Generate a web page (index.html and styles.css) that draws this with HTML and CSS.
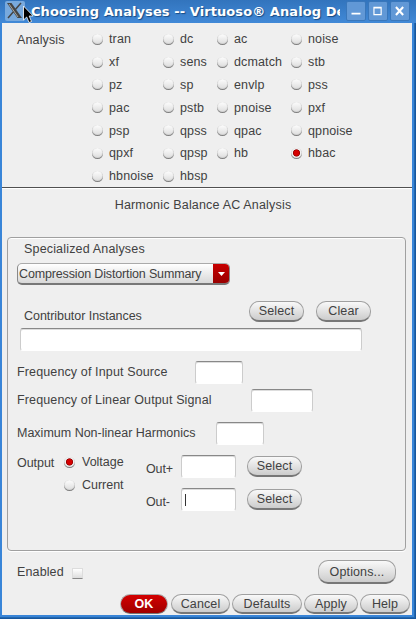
FILE: index.html
```html
<!DOCTYPE html>
<html lang="en">
<head>
<meta charset="utf-8">
<title>Choosing Analyses</title>
<link rel="stylesheet" href="styles.css">
</head>
<body>
<div class="window">
  <header class="titlebar">
    <svg class="app-icon" width="20" height="20" viewBox="0 0 20 20"><rect width="20" height="20" rx="2" fill="#78a9dd"/><path d="M2 2h4.500L17 17h-4.500z" fill="#444"/><path d="M16 2L3 17" stroke="#444" stroke-width="1.500"/><path d="M4 3l9 13" stroke="#aaa59c" stroke-width="1"/></svg>
    <h1 class="title">Choosing Analyses -- Virtuoso® Analog De</h1>
    <svg class="cursor" width="11" height="18" viewBox="0 0 11 18"><path d="M.5 1v14l3.200-3 2.300 5.500 2.500-1-2.300-5.500h4z" fill="#000" stroke="#fff" stroke-width=".8"/></svg>
    <div class="controls">
      <svg class="control" viewBox="0 0 20 20"><path d="M5 13h10" stroke="#fff" stroke-width="2"/></svg>
      <svg class="control" viewBox="0 0 20 20"><path d="M5.500 6h8v8h-8zM5.500 6.500h8" fill="none" stroke="#fff" stroke-width="1.300"/></svg>
      <svg class="control" viewBox="0 0 20 20"><path d="M5.500 5.500l8 9M13.500 5.500l-8 9" stroke="#fff" stroke-width="2.300"/></svg>
    </div>
  </header>
  <main class="content">
    <section class="analysis">
      <span class="analysis-label">Analysis</span>
      <div class="choices">
        <span class="choice"><i class="radio"></i>tran</span><span class="choice"><i class="radio"></i>dc</span><span class="choice"><i class="radio"></i>ac</span><span class="choice"><i class="radio"></i>noise</span>
        <span class="choice"><i class="radio"></i>xf</span><span class="choice"><i class="radio"></i>sens</span><span class="choice"><i class="radio"></i>dcmatch</span><span class="choice"><i class="radio"></i>stb</span>
        <span class="choice"><i class="radio"></i>pz</span><span class="choice"><i class="radio"></i>sp</span><span class="choice"><i class="radio"></i>envlp</span><span class="choice"><i class="radio"></i>pss</span>
        <span class="choice"><i class="radio"></i>pac</span><span class="choice"><i class="radio"></i>pstb</span><span class="choice"><i class="radio"></i>pnoise</span><span class="choice"><i class="radio"></i>pxf</span>
        <span class="choice"><i class="radio"></i>psp</span><span class="choice"><i class="radio"></i>qpss</span><span class="choice"><i class="radio"></i>qpac</span><span class="choice"><i class="radio"></i>qpnoise</span>
        <span class="choice"><i class="radio"></i>qpxf</span><span class="choice"><i class="radio"></i>qpsp</span><span class="choice"><i class="radio"></i>hb</span><span class="choice"><i class="radio on"></i>hbac</span>
        <span class="choice"><i class="radio"></i>hbnoise</span><span class="choice"><i class="radio"></i>hbsp</span>
      </div>
    </section>
    <h2 class="heading">Harmonic Balance AC Analysis</h2>
    <section class="group">
      <div class="group-title">Specialized Analyses</div>
      <div class="combo"><span class="combo-text">Compression Distortion Summary</span><span class="combo-arrow"><svg width="7" height="4" viewBox="0 0 7 4"><path d="M0 0h7L3.500 4z" fill="#fff"/></svg></span></div>
      <div class="row contributors"><span class="label">Contributor Instances</span><span class="button">Select</span><span class="button">Clear</span></div>
      <div class="field instances"></div>
      <div class="row input-source"><span class="label">Frequency of Input Source</span><div class="field"></div></div>
      <div class="row output-signal"><span class="label">Frequency of Linear Output Signal</span><div class="field"></div></div>
      <div class="row harmonics"><span class="label">Maximum Non-linear Harmonics</span><div class="field"></div></div>
      <div class="output">
        <span class="output-label">Output</span>
        <div class="output-types"><span class="choice"><i class="radio on"></i>Voltage</span><span class="choice"><i class="radio"></i>Current</span></div>
        <div class="nets">
          <div class="net"><span class="label">Out+</span><div class="field"></div><span class="button">Select</span></div>
          <div class="net"><span class="label">Out-</span><div class="field"><i class="caret"></i></div><span class="button">Select</span></div>
        </div>
      </div>
    </section>
    <div class="enabled"><span class="label">Enabled</span><i class="check"></i><span class="button options">Options...</span></div>
    <footer class="actions"><span class="button ok">OK</span><span class="button cancel">Cancel</span><span class="button defaults">Defaults</span><span class="button apply">Apply</span><span class="button help">Help</span></footer>
  </main>
</div>
</body>
</html>
```

FILE: styles.css
```css
* { box-sizing: border-box; }
body { margin: 0; font: 12.5px/16px "Liberation Sans", sans-serif; letter-spacing: .13px; color: #414141; white-space: nowrap; }
.window { width: 416px; height: 619px; overflow: hidden; padding: 0 4px 4px 2px; background: #3985d8; box-shadow: inset -1px -1px #16569f, inset -2px -2px #2368ae; }
.titlebar { position: relative; display: flex; height: 23px; margin: 0 -4px 0 -2px; padding: 1px 7px 0 5px; background: linear-gradient(#3274bd, #4189d7); }
.app-icon { flex: none; }
.title { flex: none; width: 309px; height: 22px; margin: 0 6px 0 6px; overflow: hidden; font: bold 13px/21px "DejaVu Sans", sans-serif; letter-spacing: .08px; color: #fff; text-shadow: 1px 1px 1px #174a83; }
.cursor { position: absolute; left: 23px; top: 5px; }
.controls { display: flex; gap: 2px; }
.control { flex: none; width: 20px; height: 20px; border: 1px solid #3977bb; border-radius: 2px; background: #6198d6; }
.content { height: 592px; background: #efefef; }
.analysis { display: flex; height: 165px; padding: 5px 0 0 15px; border-bottom: 1px solid #505050; box-shadow: 0 1px #fff; }
.analysis-label { width: 75px; padding-top: 4px; }
.choices { display: grid; grid-template-columns: 71px 54px 74px 100px; grid-template-rows: repeat(7, 22.8px); }
.choice { display: flex; align-items: center; gap: 6px; }
.radio { width: 11px; height: 11px; border-radius: 50%; background: linear-gradient(#fdfdfd, #dadada); box-shadow: inset 0 -1px 1px #777, inset 0 0 1px #ddd; }
.radio.on { background: radial-gradient(circle at 50% 45%, #d50000 0 2.500px, #900000 3.200px, #f2f2f2 4px); }
.heading { height: 49px; margin: 0; padding: 9px 8px 0 0; font: inherit; line-height: 17px; text-align: center; letter-spacing: .18px; }
.group { height: 314px; margin: 0 6px 0 5px; border: 1px solid #a0a0a0; border-radius: 4px; box-shadow: inset 0 1px #fff, 0 1px #fff; padding-left: 9px; }
.group-title { padding: 3px 0 0 7px; height: 25px; letter-spacing: .17px; }
.combo { display: flex; width: 213px; height: 22px; border: 1px solid #888; border-top-color: #aaa; border-bottom: 2px solid #777; border-radius: 5px; overflow: hidden; background: linear-gradient(#fff, #d8d8d8); }
.combo-text { flex: 1; padding-left: 1px; line-height: 20px; letter-spacing: -.15px; }
.combo-arrow { display: flex; align-items: center; justify-content: center; width: 16px; background: linear-gradient(#c80000, #980000); }
.row { display: flex; }
.contributors { height: 43px; padding: 16px 0 0 7px; }
.contributors .label { width: 225px; padding-top: 7px; letter-spacing: -.05px; }
.contributors .button + .button { margin-left: 12px; }
.button { display: flex; flex: none; align-items: center; justify-content: center; width: 55px; height: 21px; border: 1px solid #a0a0a0; border-bottom: 2px solid #777; border-radius: 10px; background: linear-gradient(#f9f9f9, #ccc); }
.field { height: 23px; background: #fff; border: 1px solid #ccc; border-top: 1px solid #888; border-bottom-color: #fff; border-radius: 3px; box-shadow: inset 0 1px #ddd; }
.instances { width: 342px; margin-left: 3px; }
.row .label { line-height: 23px; }
.contributors .label { line-height: 16px; }
.input-source { height: 28px; margin-top: 10px; }
.input-source .label { width: 178px; }
.input-source .field { width: 48px; }
.output-signal { height: 33px; }
.output-signal .label { width: 234px; }
.output-signal .field { width: 62px; }
.harmonics { height: 33px; }
.harmonics .label { width: 199px; letter-spacing: 0; }
.harmonics .field { width: 48px; }
.output { display: flex; }
.output-label { width: 47px; line-height: 16px; letter-spacing: -.05px; }
.output-types { width: 82px; }
.output-types .choice { height: 23px; gap: 7px; margin-top: -4.500px; margin-bottom: 4.500px; letter-spacing: -.02px; }
.net { display: flex; height: 33px; }
.net .label { width: 35px; line-height: 28px; letter-spacing: -.1px; }
.net .field { width: 55px; padding: 5px 0 0 3px; }
.net .button { margin: 1px 0 0 11px; }
.caret { display: block; width: 1px; height: 12px; background: #333; }
.enabled { display: flex; height: 43px; padding: 9px 16px 0 15px; }
.enabled .label { width: 55px; line-height: 24px; }
.check { width: 11px; height: 11px; margin-top: 8px; border: 1px solid #ddd; border-bottom-color: #888; background: linear-gradient(#fff, #ddd); }
.options { width: 78px; height: 24px; margin-left: auto; }
.actions { display: flex; padding-left: 118px; }
.actions .button { height: 20px; }
.actions .ok { width: 48px; margin-right: 3px; background: linear-gradient(#d30000, #a00000); border: 1px solid #aaa; border-bottom-color: #777; color: #fff; font-weight: bold; }
.actions .cancel { width: 59px; margin-right: 2px; }
.actions .defaults { width: 70px; margin-right: 2px; }
.actions .apply { width: 54px; margin-right: 2px; }
.actions .help { width: 50px; }
```
